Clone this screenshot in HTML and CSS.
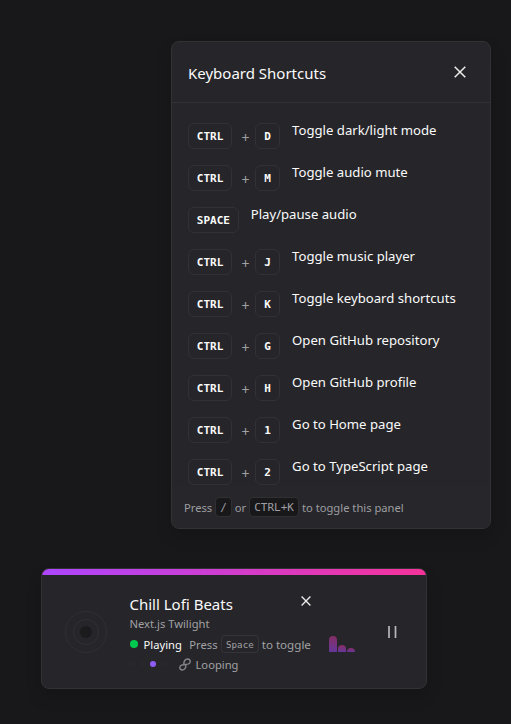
FILE: index.html
```
<!DOCTYPE html>
<html lang="en">
<head>
<meta charset="utf-8">
<title>Keyboard Shortcuts</title>
<link rel="stylesheet" href="styles.css">
</head>
<body>
<section class="panel">
  <header class="panel-head">
    <h2>Keyboard Shortcuts</h2>
    <svg class="close" viewBox="0 0 12 12"><path d="M.7.7l10.6 10.6M11.3.7L.7 11.3"/></svg>
  </header>
  <ul class="list">
    <li><kbd>CTRL</kbd><i>+</i><kbd>D</kbd><span>Toggle dark/light mode</span></li>
    <li><kbd>CTRL</kbd><i>+</i><kbd>M</kbd><span>Toggle audio mute</span></li>
    <li><kbd>SPACE</kbd><span>Play/pause audio</span></li>
    <li><kbd>CTRL</kbd><i>+</i><kbd>J</kbd><span>Toggle music player</span></li>
    <li><kbd>CTRL</kbd><i>+</i><kbd>K</kbd><span>Toggle keyboard shortcuts</span></li>
    <li><kbd>CTRL</kbd><i>+</i><kbd>G</kbd><span>Open GitHub repository</span></li>
    <li><kbd>CTRL</kbd><i>+</i><kbd>H</kbd><span>Open GitHub profile</span></li>
    <li><kbd>CTRL</kbd><i>+</i><kbd>1</kbd><span>Go to Home page</span></li>
    <li><kbd>CTRL</kbd><i>+</i><kbd>2</kbd><span>Go to TypeScript page</span></li>
  </ul>
  <footer class="panel-foot"><span>Press</span><kbd>/</kbd><span>or</span><kbd>CTRL+K</kbd><span>to toggle this panel</span></footer>
</section>
<section class="player">
  <div class="bar"></div>
  <div class="player-body">
    <svg class="disc" viewBox="0 0 42 42"><circle cx="21" cy="21" r="20.5"/><circle cx="21" cy="21" r="12.5"/><circle class="hub" cx="21" cy="21" r="6"/></svg>
    <div class="info">
      <div class="title-row"><h3>Chill Lofi Beats</h3><svg class="close small" viewBox="0 0 12 12"><path d="M.7.7l10.6 10.6M11.3.7L.7 11.3"/></svg></div>
      <div class="artist">Next.js Twilight</div>
      <div class="status"><b class="live"></b><span class="playing">Playing</span><span class="press">Press</span><kbd>Space</kbd><span class="hint">to toggle</span></div>
      <div class="loop"><div class="dots"><b></b><b></b><b class="on"></b><b></b></div>
        <svg class="link" viewBox="0 0 12 13"><path d="M4.800 6.500C4.600 3.200 6.300 1 8.500 1C10.400 1 11.300 2.200 11.200 3.800C11 5.800 9 6.500 6.500 6.500C3.600 6.500 .8 7.300 .8 9.600C.8 11.200 2 12 3.400 12C5.800 12 7.200 9.700 6.900 6.800"/></svg>
        <span>Looping</span></div>
    </div>
    <div class="eq"><b class="e1"></b><b class="e2"></b><b class="e3"></b></div>
    <svg class="pause" viewBox="0 0 9 12"><path d="M1 0v12M7.500 0v12"/></svg>
  </div>
</section>
</body>
</html>
```
FILE: styles.css
```
* { box-sizing: border-box; }
body {
  margin: 0; height: 724px; overflow: hidden; background: #18181a; color: #fafafa;
  font-family: "Noto Sans", "Open Sans", sans-serif; display: flex; flex-direction: column;
}
h2, h3, ul { margin: 0; padding: 0; font-weight: 400; list-style: none; }
i { font-style: normal; }
span, h2, h3, .artist { white-space: nowrap; }
kbd { font-family: "DejaVu Sans Mono", monospace; flex: none; }
svg { fill: none; flex: none; }
.panel {
  width: 320px; height: 488px; margin: 41px 0 0 171px; border: 1px solid #323235; border-radius: 8px;
  background: #26262a; box-shadow: 0 8px 16px rgba(0,0,0,.15); display: flex; flex-direction: column; overflow: hidden;
}
.panel-head {
  height: 61px; flex: none; padding: 0 24px 0 16px; border-bottom: 1px solid #323236;
  display: flex; align-items: center; justify-content: space-between;
}
h2 { font-size: 15px; line-height: 24px; margin-top: 1px; }
.close { width: 12px; height: 12px; stroke: #ececec; stroke-width: 1.5; }
.list { flex: 1; min-height: 0; overflow: hidden; padding: 20px 16px 0; }
.list li { height: 42px; display: flex; align-items: flex-start; }
.list kbd {
  height: 26px; padding: 0 7.800px; border: 1px solid #323236; border-radius: 6px;
  font-size: 11px; line-height: 26px; font-weight: 700;
}
.list i { width: 23px; padding-left: 4px; text-align: center; color: #a1a1a1; font-size: 14px; line-height: 29px; }
.list i + kbd { width: 25px; padding: 0; text-align: center; }
.list span { margin-left: 12px; font-size: 13.150px; line-height: 20px; margin-top: -3px; }
.panel-foot {
  height: 42px; flex: none; background: #27272b; padding: 0 12px; display: flex; align-items: center;
  color: #9d9da1; font-size: 11.200px;
}
.panel-foot kbd {
  height: 20px; padding: 0 4px; margin: 0 3px; border: 1px solid #303033; border-radius: 4px;
  background: #18181a; font-size: 11px; line-height: 19px;
}
.player {
  width: 386px; height: 121px; margin: 39px 0 0 41px; border: 1px solid #323235; border-radius: 8px;
  background: #26262a; box-shadow: 0 8px 16px rgba(0,0,0,.15); overflow: hidden;
}
.bar { height: 6px; background: linear-gradient(90deg, #ad46ff, #f6339a); }
.player-body { display: flex; height: 113px; }
.disc { width: 42px; height: 42px; margin: 36px 0 0 23px; stroke: #303034; }
.disc .hub { fill: #1b1b1d; stroke: none; }
.info { width: 182px; margin: 18px 0 0 22.500px; color: #a1a1a5; font-size: 11.200px; }
.title-row { display: flex; justify-content: space-between; height: 22px; }
h3 { font-size: 15px; line-height: 22px; color: #fafafa; }
.small { width: 10px; height: 10px; margin: 3px .5px 0 0; stroke-width: 1.6; }
.artist { line-height: 18px; height: 16px; }
.status { height: 22px; display: flex; align-items: center; margin-top: 2px; }
.live { width: 8px; height: 8px; border-radius: 50%; background: #00c950; flex: none; }
.playing { margin-left: 6px; color: #fafafa; }
.press { margin-left: 7.500px; }
.status kbd {
  height: 18px; padding: 0 4.500px; margin: 0 2.500px 0 3px; border: 1px solid #343438; border-radius: 4px;
  font-size: 9.200px; line-height: 17px;
}
.hint { font-size: 11.600px; }
.loop { height: 18px; display: flex; align-items: center; }
.dots { display: flex; gap: 4px; width: 49px; }
.dots b { width: 6px; height: 6px; border-radius: 50%; background: #28282c; }
.dots .on { background: #8e5cf6; }
.link { width: 12px; height: 13px; margin-right: 5px; stroke: #85858a; stroke-width: 1.4; }
.eq { display: flex; align-items: flex-end; gap: 1px; height: 16px; margin: 61px 0 0 17.500px; }
.eq b { width: 8px; border-radius: 4px 4px 0 0; background: linear-gradient(#842e63, #67369b); }
.e1 { height: 16px; }
.e2 { height: 7px; }
.e3 { height: 4px; }
.pause { width: 9px; height: 12px; margin: 51px 0 0 33px; stroke: #b9b9bb; stroke-width: 1.7; }
```
